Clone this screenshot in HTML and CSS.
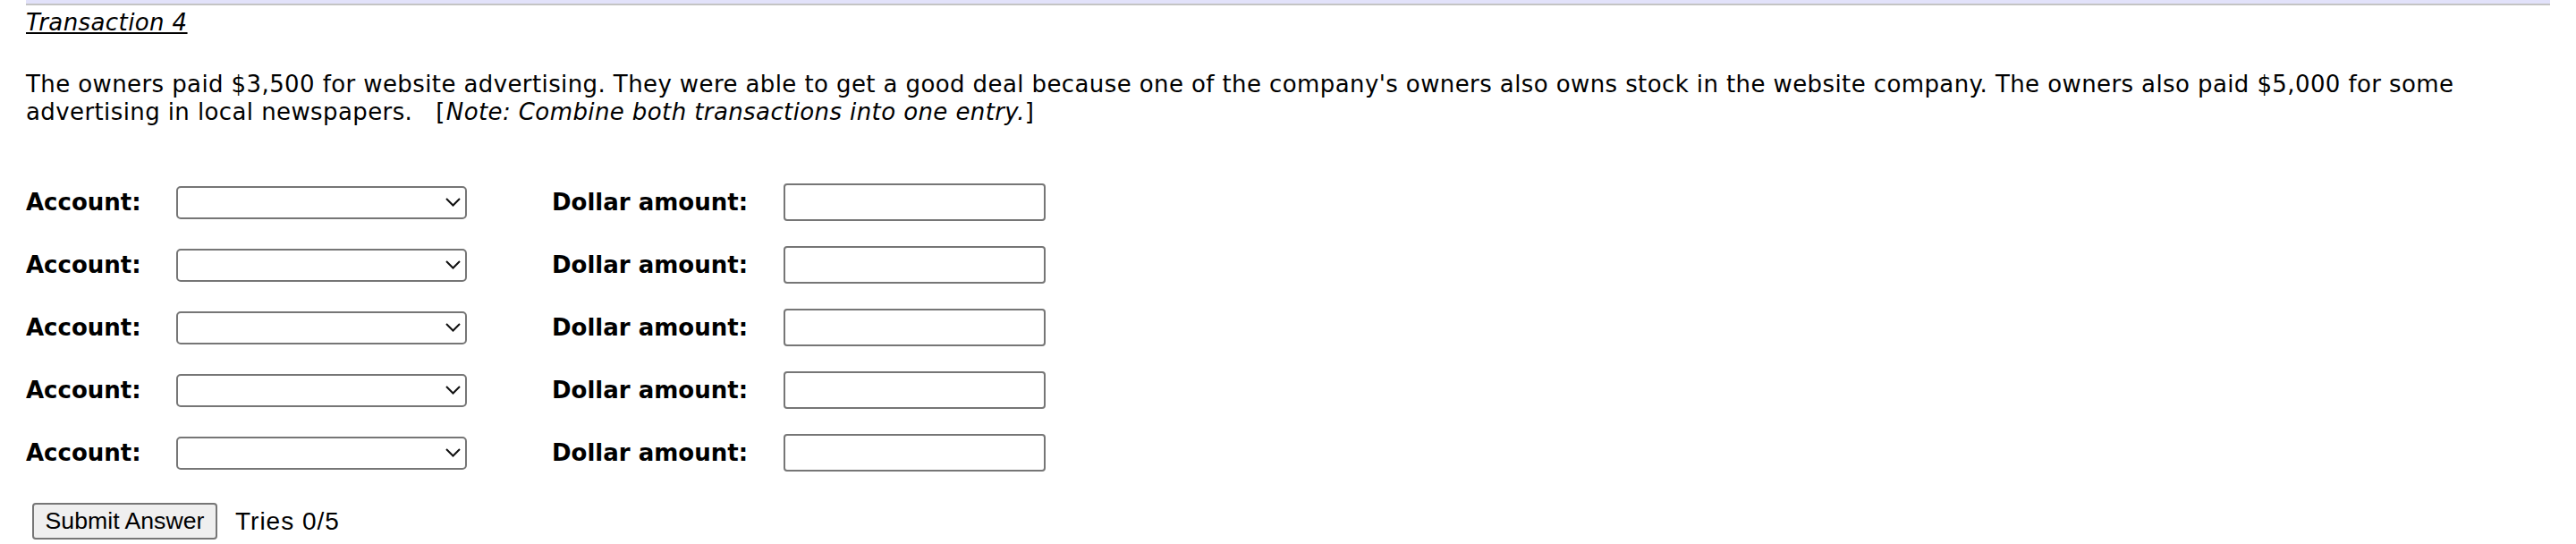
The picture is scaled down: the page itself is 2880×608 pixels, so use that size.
FILE: index.html
```html
<!DOCTYPE html>
<html lang="en">
<head>
<meta charset="utf-8">
<title>Transaction 4</title>
<link rel="stylesheet" href="styles.css">
</head>
<body>
<div class="page">
  <div class="topbar"></div>
  <div class="title">Transaction 4</div>
  <p class="question">The owners paid $3,500 for website advertising. They were able to get a good deal because one of the company's owners also owns stock in the website company. The owners also paid $5,000 for some advertising in local newspapers. &nbsp;&nbsp;[<i class="note">Note: Combine both transactions into one entry.</i>]</p>
  <div class="entries">
    <div class="entry">
      <label class="lbl lbl-account">Account:</label>
      <div class="select-wrap"><select class="select"><option></option></select><svg class="chev" width="17" height="10" viewBox="0 0 17 10"><path d="M1 1 L8.5 8.5 L16 1" fill="none" stroke="#111" stroke-width="2"/></svg></div>
      <label class="lbl lbl-amount">Dollar amount:</label>
      <input class="amount" type="text">
    </div>
    <div class="entry">
      <label class="lbl lbl-account">Account:</label>
      <div class="select-wrap"><select class="select"><option></option></select><svg class="chev" width="17" height="10" viewBox="0 0 17 10"><path d="M1 1 L8.5 8.5 L16 1" fill="none" stroke="#111" stroke-width="2"/></svg></div>
      <label class="lbl lbl-amount">Dollar amount:</label>
      <input class="amount" type="text">
    </div>
    <div class="entry">
      <label class="lbl lbl-account">Account:</label>
      <div class="select-wrap"><select class="select"><option></option></select><svg class="chev" width="17" height="10" viewBox="0 0 17 10"><path d="M1 1 L8.5 8.5 L16 1" fill="none" stroke="#111" stroke-width="2"/></svg></div>
      <label class="lbl lbl-amount">Dollar amount:</label>
      <input class="amount" type="text">
    </div>
    <div class="entry">
      <label class="lbl lbl-account">Account:</label>
      <div class="select-wrap"><select class="select"><option></option></select><svg class="chev" width="17" height="10" viewBox="0 0 17 10"><path d="M1 1 L8.5 8.5 L16 1" fill="none" stroke="#111" stroke-width="2"/></svg></div>
      <label class="lbl lbl-amount">Dollar amount:</label>
      <input class="amount" type="text">
    </div>
    <div class="entry">
      <label class="lbl lbl-account">Account:</label>
      <div class="select-wrap"><select class="select"><option></option></select><svg class="chev" width="17" height="10" viewBox="0 0 17 10"><path d="M1 1 L8.5 8.5 L16 1" fill="none" stroke="#111" stroke-width="2"/></svg></div>
      <label class="lbl lbl-amount">Dollar amount:</label>
      <input class="amount" type="text">
    </div>
  </div>
  <div class="actions">
    <button class="submit" type="button">Submit Answer</button>
    <span class="tries">Tries 0/5</span>
  </div>
</div>
</body>
</html>
```
FILE: styles.css
```css
html, body {
  margin: 0;
  padding: 0;
  background: #fff;
}
.page {
  padding: 0 29px;
  font-family: "DejaVu Sans", Verdana, sans-serif;
  font-size: 26px;
  color: #000;
}
.topbar {
  height: 4px;
  background: #e2e2fa;
  border-bottom: 2px solid #c4c4c4;
}
.title {
  margin-top: 4px;
  font-style: italic;
  text-decoration: underline;
  line-height: 30px;
  letter-spacing: 0.4px;
}
.question {
  margin: 39px 0 0 0;
  line-height: 31px;
  letter-spacing: 0.4px;
}
.note {
  padding-left: 1px;
}
.entries {
  margin-top: 50px;
  display: flex;
  flex-direction: column;
}
.entry {
  height: 70px;
  display: flex;
  align-items: center;
}
.lbl {
  font-weight: bold;
}
.lbl-account {
  width: 168px;
}
.lbl-amount {
  width: 259px;
  margin-left: 95px;
}
.select-wrap {
  width: 325px;
  height: 37px;
  box-sizing: border-box;
  border: 2px solid #767676;
  border-radius: 5px;
  display: flex;
  align-items: center;
  padding-right: 5px;
  background: #fff;
}
.select {
  flex: 1;
  height: 100%;
  border: none;
  background: transparent;
  appearance: none;
  -webkit-appearance: none;
  outline: none;
}
.chev {
  display: block;
}
.amount {
  width: 293px;
  height: 42px;
  box-sizing: border-box;
  border: 2px solid #767676;
  border-radius: 4px;
  margin: 0;
  padding: 0;
  background: #fff;
}
.actions {
  margin-top: 21px;
  display: flex;
  align-items: center;
  padding-left: 7px;
}
.submit {
  width: 207px;
  height: 41px;
  box-sizing: border-box;
  border: 2px solid #767676;
  border-radius: 4px;
  background: #efefef;
  font-family: "Liberation Sans", Arial, sans-serif;
  font-size: 26.67px;
  color: #000;
  padding: 0;
}
.tries {
  margin-left: 20px;
  font-family: "Liberation Sans", Arial, sans-serif;
  font-size: 28px;
  letter-spacing: 1px;
}
```
